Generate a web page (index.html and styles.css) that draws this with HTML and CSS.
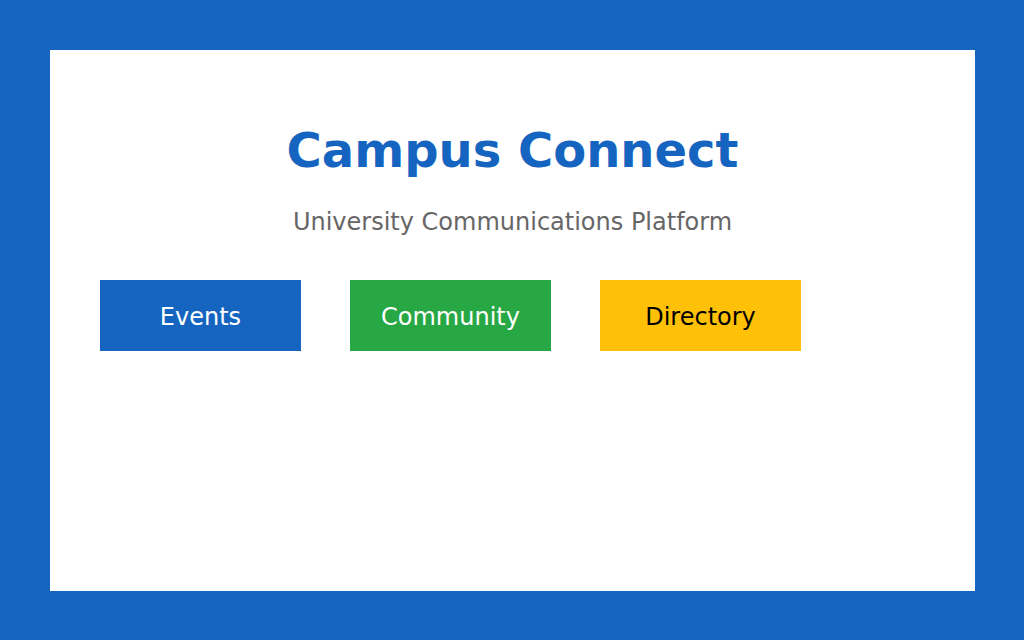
FILE: index.html
```html
<!DOCTYPE html>
<html lang="en">
<head>
  <meta charset="UTF-8">
  <meta name="viewport" content="width=device-width, initial-scale=1.0">
  <title>Campus Connect</title>
  <link rel="stylesheet" href="styles.css">
</head>
<body>
  <div class="card">
    <h1>Campus Connect</h1>
    <p class="subtitle">University Communications Platform</p>
    <div class="actions">
      <button class="btn btn-events">Events</button>
      <button class="btn btn-community">Community</button>
      <button class="btn btn-directory">Directory</button>
    </div>
  </div>
</body>
</html>
```

FILE: styles.css
```css
body { margin: 0; padding: 50px; background: #1565c0; font-family: "DejaVu Sans", sans-serif; }
.card { background: white; width: 925px; height: 541px; box-sizing: border-box; padding: 50px; }
h1 { text-align: center; color: #1565c0; font-size: 48px; margin: 22px 0 0; }
.subtitle { text-align: center; color: #666; font-size: 24px; margin: 30px 0 0; }
.actions { display: flex; gap: 49px; margin-top: 44px; }
.btn { width: 201px; height: 71px; border: none; border-radius: 0; font-family: inherit; font-size: 24px; color: white; padding: 2px 0 0; }
.btn-events { background: #1565c0; }
.btn-community { background: #28a745; }
.btn-directory { background: #ffc107; color: black; }
```
